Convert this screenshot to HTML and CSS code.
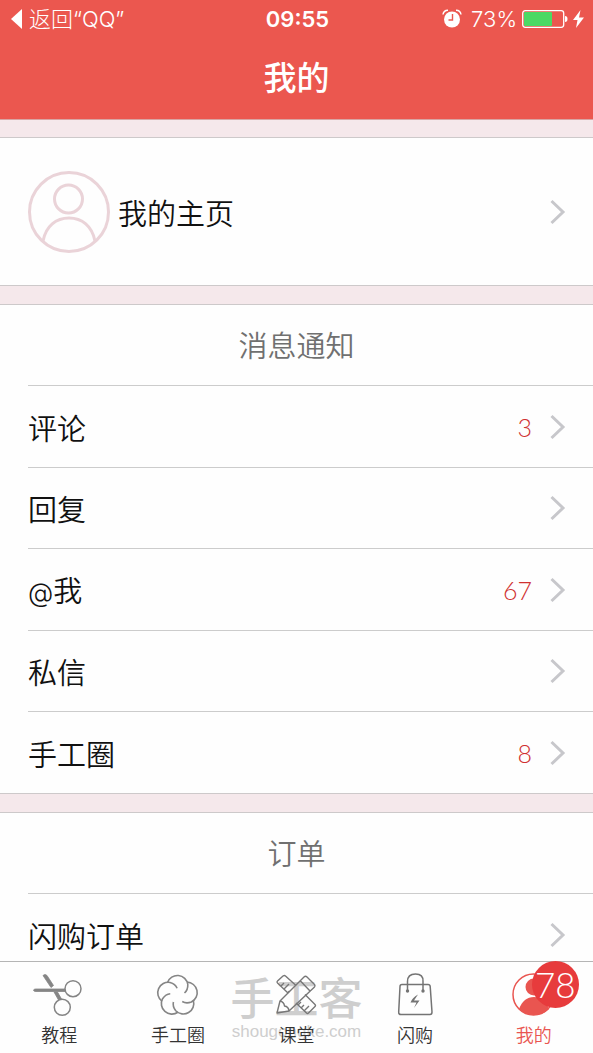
FILE: index.html
```html
<!DOCTYPE html>
<html lang="zh-CN">
<head>
<meta charset="utf-8">
<meta name="viewport" content="width=device-width, initial-scale=1">
<title>我的</title>
<link rel="stylesheet" href="styles.css">
</head>
<body>
<svg class="symbols" aria-hidden="true">
  <symbol id="chevron" viewBox="0 0 16 26"><path d="M1.5 2 13 13 1.5 24" fill="none" stroke="currentColor" stroke-width="3"/></symbol>
</svg>
<div class="app">
  <header class="header">
    <div class="status">
      <a class="status-back" href="#"><svg width="12" height="20" viewBox="0 0 12 20"><path d="M11 0v20L0 10z" fill="currentColor"/></svg>返回“QQ”</a>
      <span class="status-time">09:55</span>
      <span class="status-power">
        <svg class="alarm" width="20" height="20" viewBox="0 0 20 20"><circle cx="10" cy="10.500" r="8" fill="currentColor"/><path d="M1 5.500A5 5 0 0 1 6 1.300M19 5.500A5 5 0 0 0 14 1.300" fill="none" stroke="currentColor" stroke-width="1.500"/><path d="M10.500 5v6H6.500" fill="none" stroke="#eb574f" stroke-width="1.400"/></svg>
        <span>73%</span>
        <svg width="46" height="18" viewBox="0 0 46 18"><rect x=".7" y=".7" width="41" height="16.600" rx="2.500" fill="none" stroke="currentColor" stroke-width="1.300"/><rect x="2" y="2" width="28" height="14" rx="1" fill="#4cd964"/><path d="M43 6q2.500 0 2.500 3T43 12z" fill="currentColor"/></svg>
        <svg width="11" height="18" viewBox="0 0 11 18"><path d="M7.500 0 0 10h4.500L3 18 11 7.500H6z" fill="currentColor"/></svg>
      </span>
    </div>
    <h1 class="title">我的</h1>
  </header>

  <main class="content">
    <section class="card">
      <a class="profile" href="#">
        <svg class="avatar" width="82" height="82" viewBox="0 0 82 82" fill="none" stroke="#ead3d8" stroke-width="3"><circle cx="41" cy="41" r="39.500"/><circle cx="40.500" cy="28" r="14"/><path d="M15 70C18 55 28 47 41 47S64 55 67 70"/></svg>
        <span class="row-name">我的主页</span>
        <svg class="chevron"><use href="#chevron"/></svg>
      </a>
    </section>

    <section class="card">
      <h2 class="card-title">消息通知</h2>
      <nav class="rows">
        <a class="row" href="#"><span class="row-name">评论</span><span class="count">3</span><svg class="chevron"><use href="#chevron"/></svg></a>
        <a class="row" href="#"><span class="row-name">回复</span><svg class="chevron"><use href="#chevron"/></svg></a>
        <a class="row" href="#"><span class="row-name"><span class="at">@</span>我</span><span class="count">67</span><svg class="chevron"><use href="#chevron"/></svg></a>
        <a class="row" href="#"><span class="row-name">私信</span><svg class="chevron"><use href="#chevron"/></svg></a>
        <a class="row" href="#"><span class="row-name">手工圈</span><span class="count">8</span><svg class="chevron"><use href="#chevron"/></svg></a>
      </nav>
    </section>

    <section class="card">
      <h2 class="card-title">订单</h2>
      <nav class="rows">
        <a class="row" href="#"><span class="row-name">闪购订单</span><svg class="chevron"><use href="#chevron"/></svg></a>
      </nav>
    </section>
  </main>

  <nav class="tabs">
    <div class="watermark"><span class="watermark-name">手工客</span><span class="watermark-site">shougongke.com</span></div>
    <a class="tab" href="#">
      <svg class="tab-icon" viewBox="0 0 50 44" fill="none" stroke="#858585" stroke-width="1.500"><path d="M9 2.500Q11 .5 13 2.500L19.500 12.500 17 14.500z M-.5 17.500q0-1.500 2-1.500L31 16v2.500L2 18.500q-2 0-2.500-1z M20 19h3.500L27.500 26l-3 1z" fill="#858585" stroke-width=".8"/><circle cx="39" cy="15.700" r="8"/><circle cx="28.300" cy="34.300" r="8"/></svg>
      <span>教程</span>
    </a>
    <a class="tab" href="#">
      <svg class="tab-icon" viewBox="0 0 50 44" fill="none" stroke="#858585" stroke-width="1.600"><path id="petal" d="M14.500 9.500A10.500 10.500 0 0 1 34.800 11.500Q35 17 31.500 20"/><use href="#petal" transform="rotate(72 24.500 22.700)"/><use href="#petal" transform="rotate(144 24.500 22.700)"/><use href="#petal" transform="rotate(216 24.500 22.700)"/><use href="#petal" transform="rotate(288 24.500 22.700)"/></svg>
      <span>手工圈</span>
    </a>
    <a class="tab" href="#">
      <svg class="tab-icon" viewBox="0 0 50 44" fill="none" stroke="#777" stroke-width="1.400" stroke-linejoin="round"><path d="M17 20 6.500 10q-1-1 0-2L12 3q1.500-1 2.500 0L25 12.500M34 21.500 44 31.500q1 1 0 2L37.500 40q-1 1-2 0L25 30"/><path d="m10 13 3-3m0 6 5-5m-1.500 9 2-2M30 35l3-3m0 6 5-5m-11-1 3-3"/><path d="M6 40 9 28 33 4q1.500-1.500 3 0l7.500 7.500q1 1.500 0 2.500L18 38zM9 28q4 1 4.500 5 4 .5 4.500 5M29.500 8 39 18"/></svg>
      <span>课堂</span>
    </a>
    <a class="tab" href="#">
      <svg class="tab-icon" viewBox="0 0 50 44" fill="none" stroke="#747474" stroke-width="1.500"><path d="M12 11.500h26q2 0 2.200 2L42 39q0 2.500-2 2.500H11q-2.500 0-2.300-2.500L10 13.500q0-2 2-2z"/><path d="M17.500 18V8.500q0-7.500 8-7.500T33 8.500V18"/><circle cx="17.500" cy="18" r="1.700" fill="#747474" stroke="none"/><circle cx="33" cy="18" r="1.700" fill="#747474" stroke="none"/><path d="M28 21.500Q22 25 20.500 29.500L26.500 29.500 24 35 29.500 27.500 24 27.500z" fill="#747474" stroke="none"/></svg>
      <span>闪购</span>
    </a>
    <a class="tab tab-current" href="#">
      <span class="tab-figure">
        <svg class="tab-icon" viewBox="0 0 50 44"><circle cx="24.500" cy="21.500" r="20.500" fill="#fff" stroke="#e95550" stroke-width="1.500"/><circle cx="25" cy="14" r="8.500" fill="#e95550"/><path d="M10 36C13 28 18 24 25 24S37 28 40 36Q34 42 25 42T10 36z" fill="#e95550"/></svg>
        <span class="badge">78</span>
      </span>
      <span>我的</span>
    </a>
  </nav>
</div>
</body>
</html>
```

FILE: styles.css
```css
* { box-sizing: border-box; }

body {
  margin: 0;
  font-family: Lato, "Noto Sans CJK SC", sans-serif;
  font-weight: 350;
  color: #111;
}

a { color: inherit; text-decoration: none; }
svg { display: block; flex: none; }
.symbols { position: absolute; width: 0; height: 0; }

.app {
  display: flex;
  flex-direction: column;
  height: 100vh;
  background: #f5e8eb;
}

.header {
  flex: none;
  background: #eb574f;
  color: #fff;
  border-bottom: 1px solid #d9a5a3;
}

.status {
  display: grid;
  grid-template-columns: 1fr auto 1fr;
  align-items: center;
  height: 38px;
  padding: 0 9px 0 11px;
  font-family: Inter, "Noto Sans CJK SC", sans-serif;
  font-size: 22px;
  font-weight: 300;
  line-height: 38px;
}
.status-back { display: flex; align-items: center; gap: 6px; }
.status-time { font-weight: 600; }
.status-power {
  display: flex;
  align-items: center;
  justify-content: flex-end;
  gap: 5px;
}
.alarm { margin-right: 4px; }

.title {
  margin: 0;
  padding-bottom: 2px;
  font-size: 33px;
  font-weight: 500;
  line-height: 79px;
  text-align: center;
}

.content { flex: 1; min-height: 0; overflow: hidden; padding-top: 17px; }

.card {
  margin-bottom: 18px;
  border: solid #cdc9ca;
  border-width: 1px 0;
  background: #fefefe;
}

.profile {
  display: flex;
  align-items: center;
  min-height: 147px;
  padding: 0 27px 0 28px;
}
.avatar { margin-right: 8px; }

.card-title {
  margin: 0;
  padding-top: 2px;
  font-size: 29px;
  font-weight: 350;
  line-height: 78px;
  text-align: center;
  color: #707070;
}

.rows { padding-left: 28px; }
.row {
  display: flex;
  align-items: center;
  height: 82px;
  padding-right: 27px;
  border-top: 1px solid #ccc;
}
.row:nth-child(even) { height: 81px; }
.row-name { flex: 1; font-size: 29px; line-height: 44px; padding-top: 4px; }
.at { font-family: Inter, sans-serif; font-size: 26px; font-weight: 300; }
.count { margin-right: 18px; font-size: 25px; font-weight: 300; line-height: 32px; color: #d03030; }
.chevron { width: 16px; height: 26px; color: #c7c7cb; }

.tabs {
  position: relative;
  flex: none;
  display: grid;
  grid-template-columns: repeat(5, 1fr);
  height: 92px;
  padding-top: 11px;
  border-top: 1px solid #b5b5b5;
  background: #fefefe;
}
.tab {
  position: relative;
  display: flex;
  flex-direction: column;
  align-items: center;
  gap: 4px;
  font-size: 18px;
  line-height: 28px;
  color: #333;
}
.tab-icon { width: 50px; height: 44px; overflow: visible; }
.tab-current { color: #e95550; }
.tab-figure { position: relative; }
.badge {
  position: absolute;
  top: -12px;
  right: -20px;
  width: 47px;
  height: 47px;
  border-radius: 50%;
  background: #e73b3c;
  color: #fff;
  font-size: 35px;
  font-weight: 300;
  line-height: 46px;
  text-align: center;
}

.watermark {
  position: absolute;
  inset: 13px 0 0;
  display: flex;
  flex-direction: column;
  align-items: center;
  color: #cecece;
}
.watermark-name { font-size: 44px; font-weight: 500; line-height: 46px; }
.watermark-site { font-family: "Liberation Sans", Arial, sans-serif; font-size: 17px; font-weight: 400; line-height: 22px; }
```
